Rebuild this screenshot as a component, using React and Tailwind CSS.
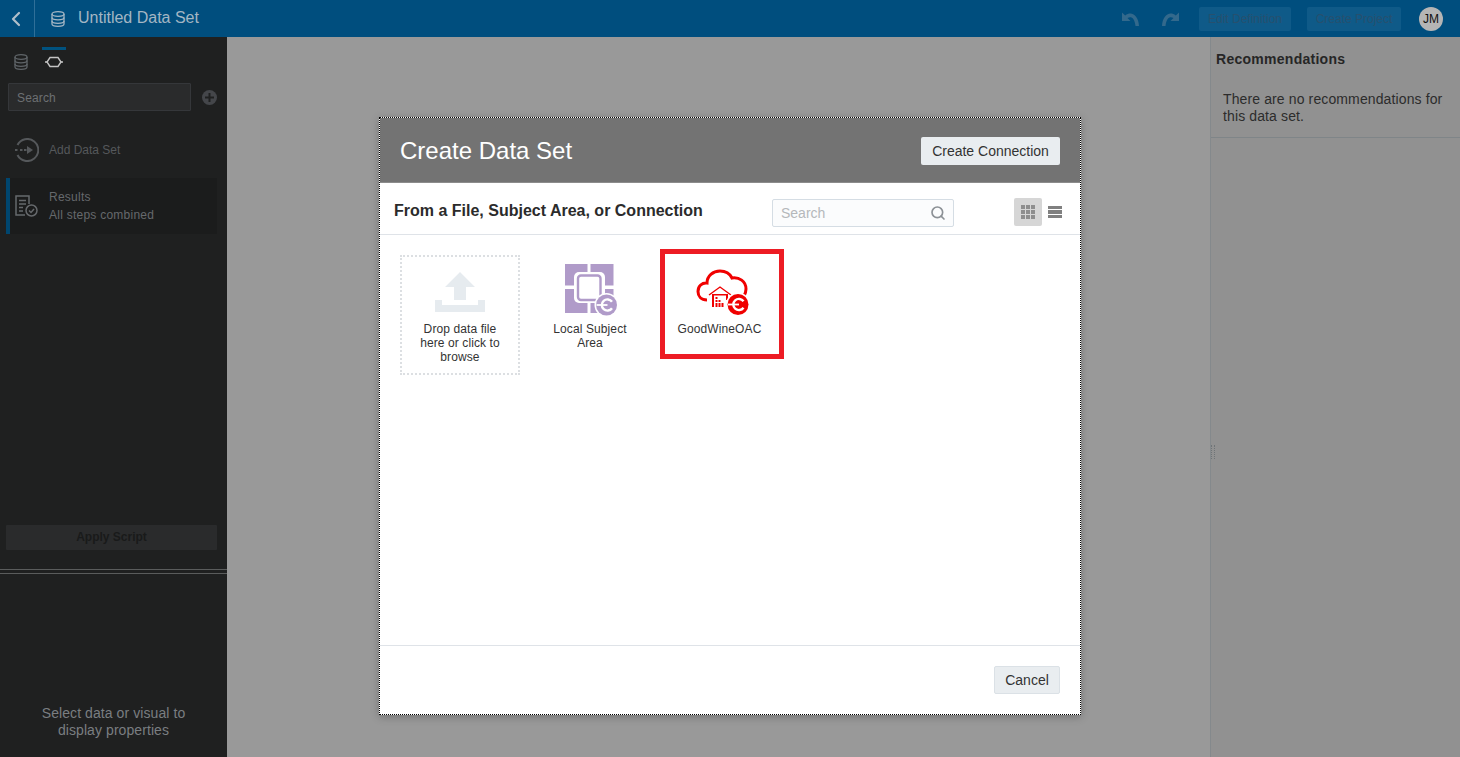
import React from 'react'
import { ChevronLeft, Search } from 'lucide-react'

function DbIcon({ className, color }) {
  return (
    <svg width="14" height="16" viewBox="0 0 14 16" fill="none" stroke={color} strokeWidth="1.3" className={className}>
      <ellipse cx="7" cy="3" rx="6" ry="2.3" />
      <path d="M1 3v10c0 1.3 2.7 2.3 6 2.3s6-1 6-2.3V3" />
      <path d="M1 6.500c0 1.3 2.700 2.300 6 2.300s6-1 6-2.300M1 10c0 1.300 2.700 2.300 6 2.300s6-1 6-2.300" />
    </svg>
  )
}

function ConnectBadge({ cx, cy, r, fill }) {
  return (
    <g>
      <circle cx={cx} cy={cy} r={r + 1.5} fill="#fff" />
      <circle cx={cx} cy={cy} r={r} fill={fill} />
      <path d={`M${cx + 5.5} ${cy - 3.2}a5.600 5.600 0 1 0 0 6.400`} fill="none" stroke="#fff" strokeWidth="2.400" />
      <path d={`M${cx - 10} ${cy}h11`} stroke="#fff" strokeWidth="1.800" />
    </g>
  )
}

function SubjectAreaIcon() {
  return (
    <svg width="54" height="54" viewBox="0 0 54 54">
      <rect x="0" y="0" width="22.500" height="21.500" fill="#b09bc9" />
      <rect x="25.500" y="0" width="23" height="21.500" fill="#b09bc9" />
      <rect x="0" y="25" width="22.500" height="24" fill="#b09bc9" />
      <rect x="25.500" y="25" width="23" height="24" fill="#b09bc9" />
      <rect x="9" y="8" width="31" height="31" rx="5" fill="#fff" />
      <rect x="13" y="11.500" width="22.500" height="24.500" rx="3" fill="#fff" stroke="#b09bc9" strokeWidth="2.400" />
      <ConnectBadge cx={41.500} cy={41} r={10.500} fill="#b09bc9" />
    </svg>
  )
}

function CloudIcon() {
  return (
    <svg width="54" height="48" viewBox="0 0 54 48" fill="none">
      <path
        d="M11 31C5 31 2 27 2 22.500 2 17 6 13.500 11 14 11 7 17 2 24 2c6 0 10 3 12 7 7-1 14 3 14 11 0 3-1 5-2 7"
        stroke="#f00000"
        strokeWidth="3"
      />
      <path d="M13 26l11-8 11 8" stroke="#f00000" strokeWidth="1.400" />
      <path d="M16 25h2v13h-2zM16 25h14v1.500H16zM30 25h2v6h-2z" fill="#f00000" />
      <path d="M19.500 28h2v2h-2zM19.500 31h2v2h-2zM19.500 34h2v4h-2zM22.500 31h2v2h-2zM22.500 34h2v4h-2zM25.500 34h2v4h-2z" fill="#f00000" />
      <ConnectBadge cx={42} cy={35.500} r={10.500} fill="#f00000" />
    </svg>
  )
}

function UploadIcon() {
  return (
    <svg width="50" height="40" viewBox="0 0 50 40" fill="#e6ebef">
      <path d="M25 0l15 15h-9v13H19V15h-9z" />
      <path d="M0 28h7v5h36v-5h7v12H0z" />
    </svg>
  )
}

function UndoArrow({ flip }) {
  return (
    <svg width="17" height="14" viewBox="0 0 17 14" fill="#33698c" className={flip ? '-scale-x-100' : ''}>
      <path d="M0 .5v8.500h8.500L5.500 6c3.500-2 7-.5 8 8H17C16.500 4 10-1.500 3.200 3.500z" />
    </svg>
  )
}

function Sidebar() {
  return (
    <aside className="w-[227px] shrink-0 bg-[#1f2020] flex flex-col">
      <div className="flex h-[46px] pt-[10px] pl-[14px] gap-[14px]">
        <div className="w-[14px] pt-[7px]">
          <DbIcon color="#5f6468" />
        </div>
        <div className="w-[24px] border-t-[3px] border-[#00527f] flex justify-center pt-[6px]">
          <svg width="18" height="12" viewBox="0 0 18 12" fill="none" stroke="#c4c4c4" strokeWidth="1.400">
            <path d="M5 1.500h8l3 4.500-3 4.500H5L2 6z" />
            <path d="M0 6h2M16 6h2" />
          </svg>
        </div>
      </div>
      <div className="flex items-center pl-[8px]">
        <div className="w-[183px] h-[28px] bg-[#2a2b2c] border border-[#35373a] rounded-[1px] text-[12px] leading-[28px] pl-[8px] text-[#6d7073] tracking-[0.15px]">
          Search
        </div>
        <div className="ml-[11px] w-[15px] h-[15px] rounded-full bg-[#44464a] flex items-center justify-center text-[#1f2020]">
          <svg width="9" height="9" viewBox="0 0 9 9" fill="currentColor">
            <path d="M3.500 0h2v3.500H9v2H5.500V9h-2V5.500H0v-2h3.500z" />
          </svg>
        </div>
      </div>
      <div className="flex items-center h-[24px] mt-[27px] pl-[15px]">
        <svg width="24" height="24" viewBox="0 0 24 24" fill="none" stroke="#55585b" strokeWidth="2">
          <path d="M2.500 7a11 11 0 1 1 0 10" />
          <path d="M0 12h2.500M5 12h2.500M9 12h2.500" />
          <path d="M12 8l6 4-6 4z" fill="#55585b" stroke="none" />
        </svg>
        <span className="ml-[10px] text-[12px] text-[#55585b]">Add Data Set</span>
      </div>
      <div className="ml-[6px] mt-[16px] w-[211px] h-[56px] bg-[#1b1c1c] border-l-[4px] border-[#00466f] flex items-center pl-[5px]">
        <svg width="23" height="23" viewBox="0 0 23 23" fill="none" stroke="#66696c" strokeWidth="1.500">
          <path d="M10 20H1V1h13v8" />
          <path d="M4 5.500h7M4 9h7M4 12.500h4M4 16h4" />
          <circle cx="16.500" cy="15.500" r="5.500" />
          <path d="M14 15.500l2 2 3-3.500" />
        </svg>
        <div className="ml-[11px] text-[12px] leading-[18px] text-[#66696c] tracking-[0.25px]">
          <div>Results</div>
          <div>All steps combined</div>
        </div>
      </div>
      <div className="flex-1" />
      <div className="ml-[6px] w-[211px] h-[25px] bg-[#2a2b2c] rounded-[1px] text-center text-[12px] leading-[25px] font-bold text-[#191a1a]">
        Apply Script
      </div>
      <div className="mt-[19px] h-[5px] border-y border-[#5a5c5c]" />
      <div className="h-[183px] flex flex-col justify-end pb-[18px] text-center text-[14px] leading-[17px] text-[#7a7e81] tracking-[0.08px]">
        <div>Select data or visual to</div>
        <div>display properties</div>
      </div>
    </aside>
  )
}

function RightPanel() {
  return (
    <aside className="w-[250px] shrink-0 bg-[#919191] border-l border-[#84898c] relative">
      <div className="h-[101px] border-b border-[#7f8588]">
        <div className="pl-[5px] pt-[14px] text-[14px] leading-[16px] font-bold text-[#262626] tracking-[0.27px]">Recommendations</div>
        <div className="pl-[12px] pt-[24px] pr-[4px] text-[14px] leading-[17px] text-[#2c2c2c] tracking-[0.12px]">
          There are no recommendations for this data set.
        </div>
      </div>
      <div className="absolute left-0 top-[408px] w-[4px] h-[14px] border-x border-dotted border-[#6f7477]" />
    </aside>
  )
}

function Modal() {
  return (
    <div className="absolute inset-0 flex justify-center items-start pt-[117px]">
      <div className="w-[702px] h-[598px] bg-white border border-dotted border-black shadow-[0_2px_8px_rgba(0,0,0,0.25)] flex flex-col">
        <div className="h-[65px] bg-[#737373] border-b border-[#8c8c8c] flex items-center justify-between pl-[20px] pr-[20px] pt-[2px] shrink-0">
          <span className="text-[24px] text-white">Create Data Set</span>
          <button className="h-[28px] w-[139px] bg-[#e9edf0] rounded-[2px] text-[14px] text-[#333]">Create Connection</button>
        </div>
        <div className="h-[52px] border-b border-[#dfe3e8] flex items-center pl-[14px] shrink-0">
          <span className="text-[16px] font-bold text-[#2b2b2b] w-[378px] mt-[5px]">From a File, Subject Area, or Connection</span>
          <div className="w-[182px] h-[28px] mt-[9px] bg-[#fbfcfd] border border-[#d5dde4] rounded-[2px] flex items-center justify-between pl-[8px] pr-[7px] text-[14px] text-[#b5b8bb]">
            <span>Search</span>
            <Search size={16} strokeWidth={2.500} color="#8c9196" />
          </div>
          <div className="ml-[60px] w-[28px] h-[28px] mt-[7px] bg-[#d6d6d6] rounded-[2px] grid grid-cols-3 gap-[1px] p-[7px]">
            {[0, 1, 2, 3, 4, 5, 6, 7, 8].map((i) => (
              <div key={i} className="bg-[#8e8e8e]" />
            ))}
          </div>
          <div className="ml-[6px] mt-[7px] w-[14px] flex flex-col gap-[1px]">
            <div className="h-[3.500px] bg-[#808080]" />
            <div className="h-[3.500px] bg-[#808080]" />
            <div className="h-[3.500px] bg-[#808080]" />
          </div>
        </div>
        <div className="flex-1 flex items-start gap-[10px] pl-[20px] text-[12px] leading-[14px] tracking-[0.1px] text-[#333] text-center">
          <div className="w-[120px] h-[120px] mt-[20px] border-2 border-dotted border-[#dcdfe2] flex flex-col items-center pt-[15px]">
            <UploadIcon />
            <div className="mt-[10px] w-[90px]">Drop data file here or click to browse</div>
          </div>
          <div className="w-[120px] mt-[29px] flex flex-col items-center">
            <div className="pl-[4px] h-[54px]">
              <SubjectAreaIcon />
            </div>
            <div className="mt-[4px] w-[90px]">Local Subject Area</div>
          </div>
          <div className="w-[124px] h-[110px] mt-[14px] border-[5px] border-[#ed1c24] flex flex-col items-center pt-[15px] pr-[5px]">
            <div className="pl-[6px] h-[48px]">
              <CloudIcon />
            </div>
            <div className="mt-[5px]">GoodWineOAC</div>
          </div>
        </div>
        <div className="h-[69px] border-t border-[#dfe3e8] flex items-start justify-end pt-[20px] pr-[20px] shrink-0">
          <button className="w-[66px] h-[28px] bg-[#e9edf0] border border-[#dbe1e6] rounded-[2px] text-[14px] text-[#333]">Cancel</button>
        </div>
      </div>
    </div>
  )
}

export default function App() {
  return (
    <div className="relative h-[757px] w-[1460px] overflow-hidden flex flex-col bg-[#999999] font-['Liberation_Sans',Arial,sans-serif]">
      <header className="h-[37px] shrink-0 bg-[#004e7e] flex items-center">
        <div className="w-[35px] h-full border-r border-[#2f6f98] flex items-center justify-center pr-[2px]">
          <ChevronLeft size={24} strokeWidth={2.200} color="#b0bfca" />
        </div>
        <div className="ml-[16px]">
          <DbIcon color="#a3b6c4" />
        </div>
        <span className="ml-[13px] text-[16px] leading-[18px] mb-[2px] text-[#a3b6c4]">Untitled Data Set</span>
        <div className="flex-1" />
        <UndoArrow />
        <div className="ml-[23px]">
          <UndoArrow flip />
        </div>
        <button className="ml-[20px] w-[92px] h-[24px] bg-[#0f5a88] rounded-[2px] text-[12px] text-[#26506e]">Edit Definition</button>
        <button className="ml-[16px] w-[94px] h-[24px] bg-[#0f5a88] rounded-[2px] text-[12px] text-[#26506e]">Create Project</button>
        <div className="ml-[18px] mr-[17px] w-[24px] h-[24px] rounded-full bg-[#b5b5b5] text-[12px] leading-[24px] text-center text-[#111]">JM</div>
      </header>
      <div className="flex-1 flex min-h-0">
        <Sidebar />
        <main className="flex-1" />
        <RightPanel />
      </div>
      <Modal />
    </div>
  )
}
